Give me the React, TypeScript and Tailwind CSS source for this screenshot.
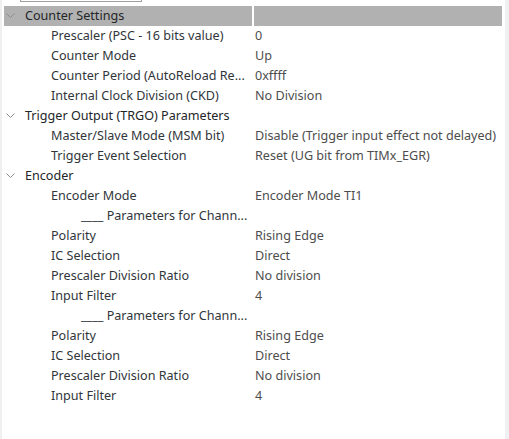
import React from "react";

type Row =
  | { kind: "group"; title: string; header?: boolean }
  | { kind: "item"; label: string; value?: string; sub?: boolean };

const rows: Row[] = [
  { kind: "group", title: "Counter Settings", header: true },
  { kind: "item", label: "Prescaler (PSC - 16 bits value)", value: "0" },
  { kind: "item", label: "Counter Mode", value: "Up" },
  { kind: "item", label: "Counter Period (AutoReload Re...", value: "0xffff" },
  { kind: "item", label: "Internal Clock Division (CKD)", value: "No Division" },
  { kind: "group", title: "Trigger Output (TRGO) Parameters" },
  { kind: "item", label: "Master/Slave Mode (MSM bit)", value: "Disable (Trigger input effect not delayed)" },
  { kind: "item", label: "Trigger Event Selection", value: "Reset (UG bit from TIMx_EGR)" },
  { kind: "group", title: "Encoder" },
  { kind: "item", label: "Encoder Mode", value: "Encoder Mode TI1" },
  { kind: "item", label: "____ Parameters for Chann...", sub: true },
  { kind: "item", label: "Polarity", value: "Rising Edge" },
  { kind: "item", label: "IC Selection", value: "Direct" },
  { kind: "item", label: "Prescaler Division Ratio", value: "No division" },
  { kind: "item", label: "Input Filter", value: "4" },
  { kind: "item", label: "____ Parameters for Chann...", sub: true },
  { kind: "item", label: "Polarity", value: "Rising Edge" },
  { kind: "item", label: "IC Selection", value: "Direct" },
  { kind: "item", label: "Prescaler Division Ratio", value: "No division" },
  { kind: "item", label: "Input Filter", value: "4" },
];

const Chevron = () => (
  <svg width="9" height="6" viewBox="0 0 9 6" className="shrink-0">
    <path d="M0.5 0.5 L4.5 4.5 L8.5 0.5" fill="none" stroke="#8a8d90" strokeWidth="1" />
  </svg>
);

export default function App() {
  return (
    <div
      className="w-[509px] h-[439px] bg-white flex overflow-hidden text-[12.6px]"
      style={{ fontFamily: '"Noto Sans", "Open Sans", sans-serif' }}
    >
      <div className="w-[2px] bg-[#eff0f1]" />
      <div className="flex-1 flex flex-col">
        {/* bottom edge of the search box above */}
        <div className="h-[6px] pl-[18px]">
          <div className="w-[122px] h-[2px] border-x border-b border-[#a0a0a0]" />
        </div>
        <div className="flex flex-col pl-[2px] pr-[1px]">
          {rows.map((r, i) =>
            r.kind === "group" ? (
              <div
                key={i}
                className={`h-[20px] flex items-center ${r.header ? "bg-[#b1b1b1]" : ""}`}
              >
                <div className="w-[248px] flex items-center pl-[2px] text-[#232629]">
                  <Chevron />
                  <span className="ml-[10px] whitespace-nowrap">{r.title}</span>
                </div>
                {r.header && <div className="w-[2px] h-full bg-white" />}
              </div>
            ) : (
              <div key={i} className="h-[20px] flex items-center">
                <div
                  className={`w-[250px] whitespace-nowrap text-[#31363b] ${r.sub ? "pl-[77px]" : "pl-[47px]"}`}
                >
                  {r.label}
                </div>
                <div className="pl-[1px] whitespace-nowrap text-[#4d4d4d]">{r.value}</div>
              </div>
            )
          )}
        </div>
      </div>
      <div className="w-[4px] bg-[#eff0f1] ml-[2px]" />
    </div>
  );
}
